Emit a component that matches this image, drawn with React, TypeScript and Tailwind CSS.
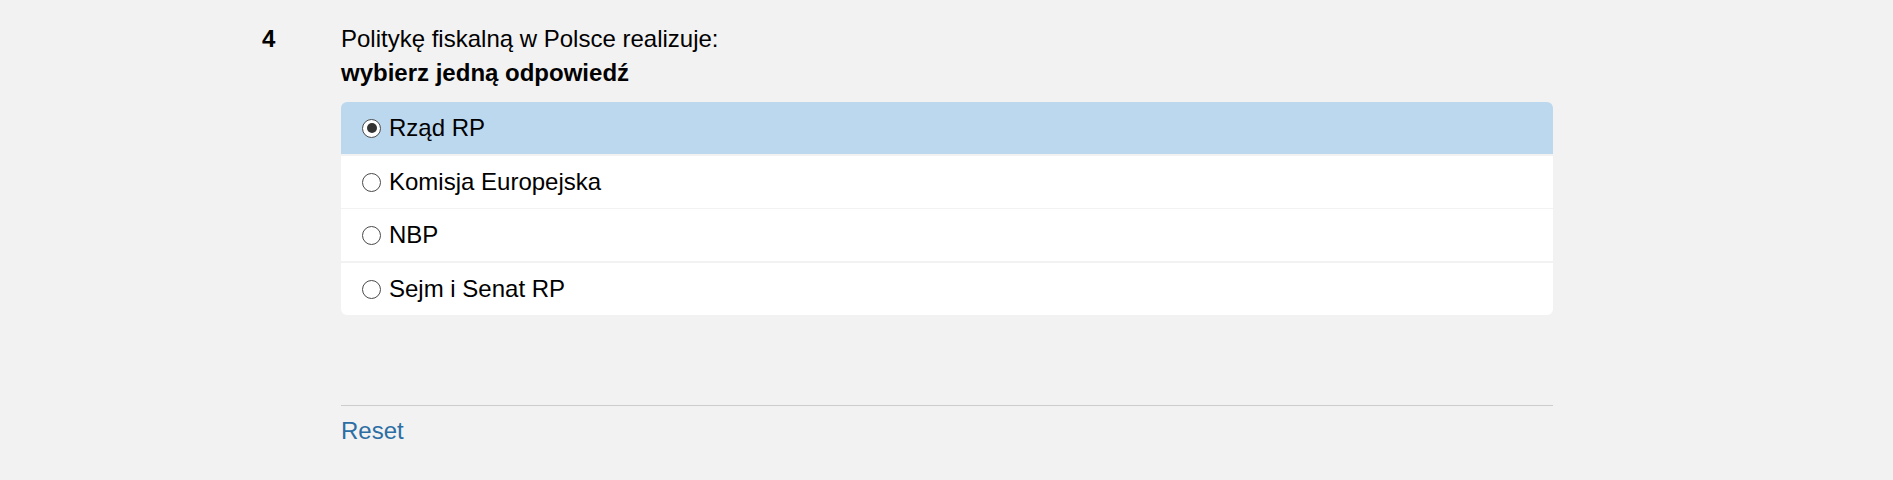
import React, { useState } from 'react';

const options = ['Rząd RP', 'Komisja Europejska', 'NBP', 'Sejm i Senat RP'];

// separators between rows differ slightly in the reference (zoomed page)
const gaps = ['mt-[2px]', 'mt-[1px]', 'mt-[2px]'];

function Radio({ checked }: { checked: boolean }) {
  return (
    <span className="w-[19px] h-[19px] rounded-full border-[1.5px] border-[#4a4a4a] bg-white flex items-center justify-center shrink-0">
      {checked && <span className="w-[10px] h-[10px] rounded-full bg-[#333333]" />}
    </span>
  );
}

export default function App() {
  const [selected, setSelected] = useState(0);

  return (
    <div
      className="min-h-[480px] w-full bg-[#f2f2f2] text-black text-[24px] leading-[33.6px]"
      style={{ fontFamily: '"Liberation Sans", Arial, sans-serif' }}
    >
      <div className="flex pt-[22px] pl-[262px]">
        <div className="w-[79px] font-bold">4</div>
        <div className="w-[1212px]">
          <p>Politykę fiskalną w Polsce realizuje:</p>
          <p className="font-bold">wybierz jedną odpowiedź</p>

          <div className="mt-[13px] rounded-[6px] overflow-hidden">
            {options.map((opt, i) => (
              <button
                key={opt}
                onClick={() => setSelected(i)}
                className={`w-full h-[52px] flex items-center gap-[8px] pl-[21px] text-left ${
                  i > 0 ? gaps[i - 1] : ''
                } ${selected === i ? 'bg-[#bcd8ef]' : 'bg-white'}`}
              >
                <Radio checked={selected === i} />
                <span>{opt}</span>
              </button>
            ))}
          </div>

          <div className="mt-[90px] border-t-[1.5px] border-[#cccccc] pt-[8px]">
            <button onClick={() => setSelected(-1)} className="text-[#2c6ea4]">
              Reset
            </button>
          </div>
        </div>
      </div>
    </div>
  );
}
